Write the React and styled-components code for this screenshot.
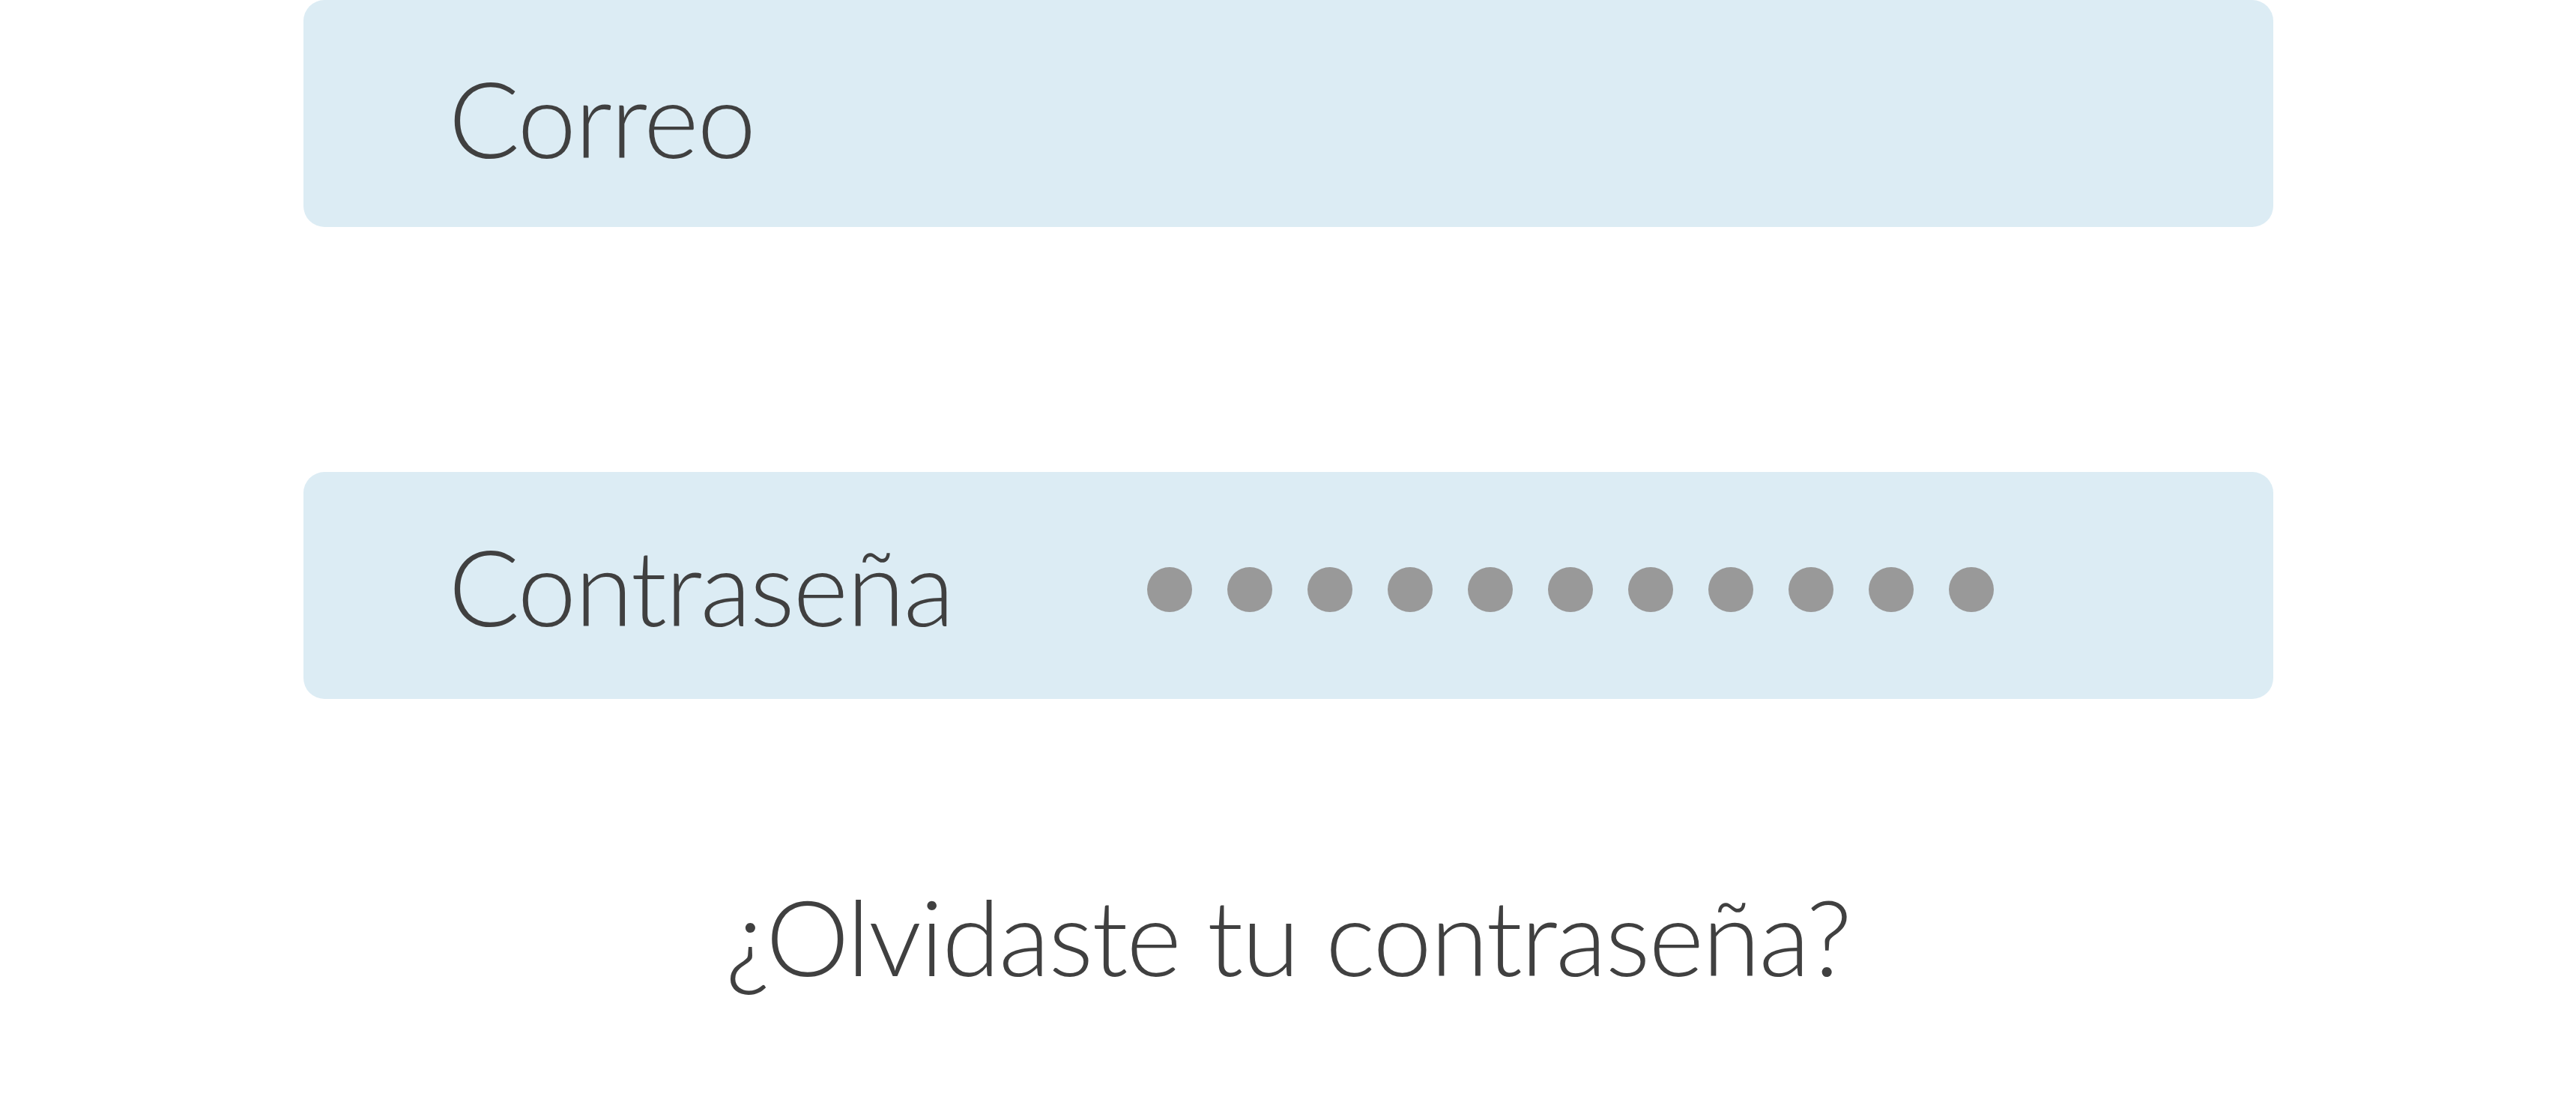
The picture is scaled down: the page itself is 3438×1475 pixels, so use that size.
import styled, { createGlobalStyle } from "styled-components";

const GlobalStyle = createGlobalStyle`
  html, body {
    margin: 0;
    padding: 0;
    background: #ffffff;
  }
  body {
    font-family: "Lato", "Open Sans", sans-serif;
    color: #404040;
  }
`;

const Page = styled.main`
  width: 3438px;
  height: 1475px;
  overflow: hidden;
`;

const Form = styled.form`
  width: 2629px;
  margin: 0 auto;
  display: flex;
  flex-direction: column;
  gap: 327px;
`;

const Field = styled.div`
  height: 303px;
  border-radius: 28px;
  background: #dcecf4;
  display: flex;
  align-items: center;
  padding-left: 194px;
  padding-top: ${(p) => p.$offset || 0}px;
  box-sizing: border-box;
`;

const Label = styled.span`
  width: 932px;
  flex: none;
  font-size: 141px;
  font-weight: 300;
  letter-spacing: -2px;
  line-height: 1;
  color: #404040;
`;

const Dots = styled.div`
  display: flex;
  gap: 47px;
  margin-top: 10px;
`;

const Dot = styled.span`
  width: 60px;
  height: 60px;
  border-radius: 50%;
  background: #999999;
`;

const Forgot = styled.a`
  display: block;
  margin-top: 245px;
  text-align: center;
  font-size: 141px;
  font-weight: 300;
  letter-spacing: -2px;
  line-height: 1;
  color: #404040;
  text-decoration: none;
`;

const App = () => {
  const dots = Array.from({ length: 11 });
  return (
    <Page>
      <GlobalStyle />
      <Form>
        <Field $offset={10}>
          <Label>Correo</Label>
        </Field>
        <Field>
          <Label>Contraseña</Label>
          <Dots>
            {dots.map((_, i) => (
              <Dot key={i} />
            ))}
          </Dots>
        </Field>
      </Form>
      <Forgot href="#">¿Olvidaste tu contraseña?</Forgot>
    </Page>
  );
};

export default App;
